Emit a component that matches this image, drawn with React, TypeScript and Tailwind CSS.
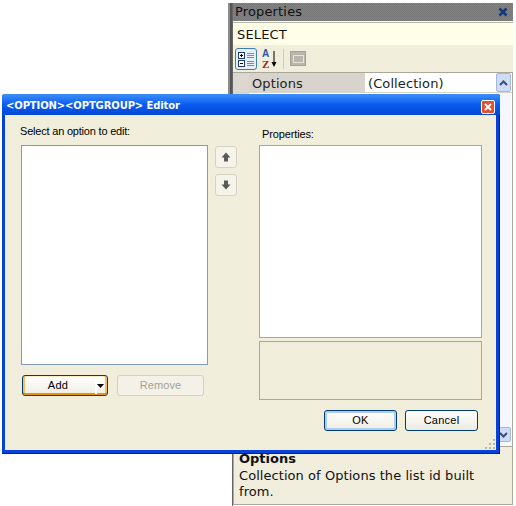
const dv = "font-['DejaVu_Sans',sans-serif]";
const ls = "font-['Liberation_Sans',sans-serif]";
const dither = "bg-[image:repeating-conic-gradient(#f3f0e0_0%_25%,#eeebd9_0%_50%)] bg-size-[2px_2px]";

function MoveButton({ down = false }: { down?: boolean }) {
  return (
    <div className="w-[22px] h-[22px] rounded-[3px] border border-[#d6d3c4] bg-[#f6f4ea] flex items-center justify-center">
      <svg width="12" height="12" viewBox="0 0 12 12" className={down ? "rotate-180" : ""}>
        <path d="M6 1.5 L10.5 6.5 H8 V10.5 H4 V6.5 H1.5 Z" fill="#5a5a5a" />
      </svg>
    </div>
  );
}

function PropertiesPanel() {
  return (
    <div className="ml-[228px] pt-[3px] flex items-start">
      <div className="w-[4px] h-[200px] border-r-2 border-[#555] bg-[#8a8a8a]" />
      <div className={`h-[503px] w-[281px] flex flex-col border-l border-[#666] ${dv} text-[13px] text-[#111]`}>
        <div className="h-[18px] flex items-center justify-between bg-[image:repeating-conic-gradient(#828282_0%_25%,#787878_0%_50%)] bg-size-[2px_2px] pl-[2px] pr-[5px] tracking-[0.15px]">
          <span>Properties</span>
          <svg width="10" height="10" viewBox="0 0 10 10">
            <path d="M1.5 1.5 L8.5 8.5 M8.5 1.5 L1.5 8.5" stroke="#123a80" strokeWidth="2.6" />
          </svg>
        </div>
        <div className="mt-[1px] border-t border-[#b8b8a8] h-[23px] pt-[2px] flex items-center bg-[#ffffe8] pl-[4px] tracking-[0.15px]">SELECT</div>
        <div className={`h-[27px] flex items-center ${dither} pl-[2px]`}>
          <div className="w-[22px] h-[22px] rounded-[3px] border border-[#3c7fb1] bg-[#e6eef8] flex items-center justify-center">
            <svg width="17" height="16" viewBox="0 0 17 16">
              <rect x="0.5" y="1.5" width="6" height="6" fill="#fff" stroke="#1c3c78" />
              <path d="M2 4.5H5M3.5 3V6" stroke="#000" />
              <rect x="0.5" y="9.5" width="6" height="6" fill="#fff" stroke="#1c3c78" />
              <path d="M2 12.5H5" stroke="#000" />
              <path d="M9 2.5H16M9 4.5H16M9 6.5H16M9 10.5H16M9 12.5H16M9 14.5H16" stroke="#8a8a8a" />
            </svg>
          </div>
          <svg width="18" height="22" viewBox="0 0 18 22" className="ml-[4px]">
            <text x="1" y="9" fontSize="10" fontWeight="700" fontFamily="Liberation Sans" fill="#2a55b0">A</text>
            <text x="1" y="20" fontSize="11" fontWeight="700" fontFamily="Liberation Serif" fill="#8c2a2a">Z</text>
            <path d="M13 3V15" stroke="#000" />
            <path d="M10.5 14H15.5L13 19Z" fill="#000" />
          </svg>
          <div className="ml-[4px] w-px h-[20px] bg-[#cfccbc]" />
          <div className="ml-[6px] w-[16px] h-[15px] bg-[#b9b6ac] border border-[#a4a298] flex items-center justify-center">
            <div className="w-[11px] h-[8px] border border-[#e6e5dc]" />
          </div>
        </div>
        <div className="flex-1 min-h-0 flex flex-col border-t border-r border-[#aca899] bg-white">
          <div className="h-[20px] flex border-b border-[#d8d4cc]">
            <div className="w-[16px] bg-[#dcd8d0]" />
            <div className="w-[116px] bg-[#d8d3cc] pl-[3px] pt-[2px] flex items-center tracking-[0.1px] text-[#222]">Options</div>
            <div className="flex-1 pl-[3px] pt-[2px] flex items-center tracking-[0.1px] text-[#222]">(Collection)</div>
            <div className="w-[15px] mr-[1px] bg-[#cfdcf5] border border-[#a5b8dc] rounded-[2px] flex items-center justify-center">
              <svg width="9" height="6" viewBox="0 0 9 6"><path d="M1 5L4.5 1.5L8 5" fill="none" stroke="#3c4f7a" strokeWidth="2" /></svg>
            </div>
          </div>
          <div className="flex-1 flex">
            <div className="w-[16px] bg-[#dcd8d0]" />
            <div className="flex-1" />
            <div className="w-[15px] mr-[1px] flex flex-col justify-end bg-[#f4f7fd] pb-[4px]">
              <div className="h-[15px] bg-[#cfdcf5] border border-[#a5b8dc] rounded-[2px] flex items-center justify-center">
                <svg width="9" height="6" viewBox="0 0 9 6"><path d="M1 1L4.5 4.5L8 1" fill="none" stroke="#3c4f7a" strokeWidth="2" /></svg>
              </div>
            </div>
          </div>
        </div>
        <div className={`h-[59px] shrink-0 mb-[1px] border border-[#aca899] ${dither} pl-[5px] pt-[4px] leading-[16px]`}>
          <div className="font-bold mb-[1px]">Options</div>
          <div className="tracking-[0.06px]">Collection of Options the list id built<br />from.</div>
        </div>
      </div>
    </div>
  );
}

function Dialog() {
  return (
    <div className="absolute left-[2px] top-[94px] w-[498px] h-[360px] flex flex-col rounded-t-[3px] bg-[#0642d6] shadow-[inset_-1px_-1px_0_#00208c] pl-[3px] pr-[4px] pb-[4px]">
      <div className="h-[21px] -ml-[3px] -mr-[4px] pl-[4px] pr-[5px] pt-[6px] flex items-start justify-between rounded-t-[3px] bg-gradient-to-b from-[#3d8ffa] via-[#0a5cf0] to-[#0349d4]">
        <span className={`${dv} font-bold text-[10px] leading-[12px] tracking-[-0.12px] text-white`}>&lt;OPTION&gt;&lt;OPTGROUP&gt; Editor</span>
        <div className="w-[14px] h-[14px] rounded-[2px] border border-white bg-[#e2512e] flex items-center justify-center">
          <svg width="10" height="10" viewBox="0 0 10 10"><path d="M2 2L8 8M8 2L2 8" stroke="#fff" strokeWidth="2" /></svg>
        </div>
      </div>
      <div className={`relative flex-1 flex flex-col ${dither} ${ls} text-[11px] text-black pl-[16px] pr-[15px] pt-[8px]`}>
        <div className="h-[277px] flex">
          <div className="w-[187px] shrink-0 flex flex-col">
            <div className="h-[16px] leading-[16px] -ml-[1px] tracking-[-0.2px]">Select an option to edit:</div>
            <div className="mt-[6px] h-[220px] border border-[#7f9db9] bg-white" />
            <div className="mt-[10px] flex items-start">
              <div className="relative ml-[1px] w-[86px] h-[21px] rounded-[3px] border border-[#003c74] bg-gradient-to-b from-white to-[#efede2] shadow-[inset_0_-2px_0_#e59700,inset_2px_0_0_#f6bf5c,inset_-2px_0_0_#f6bf5c,inset_0_1px_0_#fde9c4] flex items-center justify-center pr-[14px] tracking-[0.25px]">
                Add
                <div className="absolute right-[10px] top-[2px] h-[16px] w-[2px] bg-white" />
                <svg width="7" height="4" viewBox="0 0 7 4" className="absolute right-[3px] top-[8px]"><path d="M0 0H7L3.5 4Z" fill="#000" /></svg>
              </div>
              <div className="ml-[9px] w-[87px] h-[21px] rounded-[3px] border border-[#d3d0c0] bg-[#f4f2e8] text-[#a3a193] flex items-center justify-center tracking-[0.1px]">Remove</div>
            </div>
          </div>
          <div className="ml-[7px] mt-[23px] shrink-0 flex flex-col gap-[6px]">
            <MoveButton />
            <MoveButton down />
          </div>
          <div className="ml-[22px] w-[223px] shrink-0 flex flex-col">
            <div className="h-[16px] mt-[3px] pl-[3px] leading-[16px] tracking-[-0.13px]">Properties:</div>
            <div className="mt-[3px] h-[193px] border border-[#aca899] bg-white" />
            <div className="mt-[3px] h-[59px] border border-[#aca899]" />
          </div>
        </div>
        <div className="mt-[10px] pr-[3px] flex justify-end gap-[8px]">
          <div className="w-[73px] h-[21px] rounded-[3px] border border-[#003c74] bg-gradient-to-b from-white to-[#efede2] shadow-[inset_0_0_0_2px_#aecbf0] flex items-center justify-center tracking-[0.25px]">OK</div>
          <div className="w-[73px] h-[21px] rounded-[3px] border border-[#003c74] bg-gradient-to-b from-white to-[#ecebe0] flex items-center justify-center tracking-[0.25px]">Cancel</div>
        </div>
        <svg width="11" height="11" viewBox="0 0 11 11" className="absolute right-0 bottom-0">
          <path d="M8 0h2v2H8zM4 4h2v2H4zM8 4h2v2H8zM0 8h2v2H0zM4 8h2v2H4zM8 8h2v2H8z" fill="#b9b6a6" />
        </svg>
      </div>
    </div>
  );
}

export default function App() {
  return (
    <div className="relative w-[516px] h-[506px] overflow-hidden bg-white">
      <PropertiesPanel />
      <Dialog />
    </div>
  );
}
